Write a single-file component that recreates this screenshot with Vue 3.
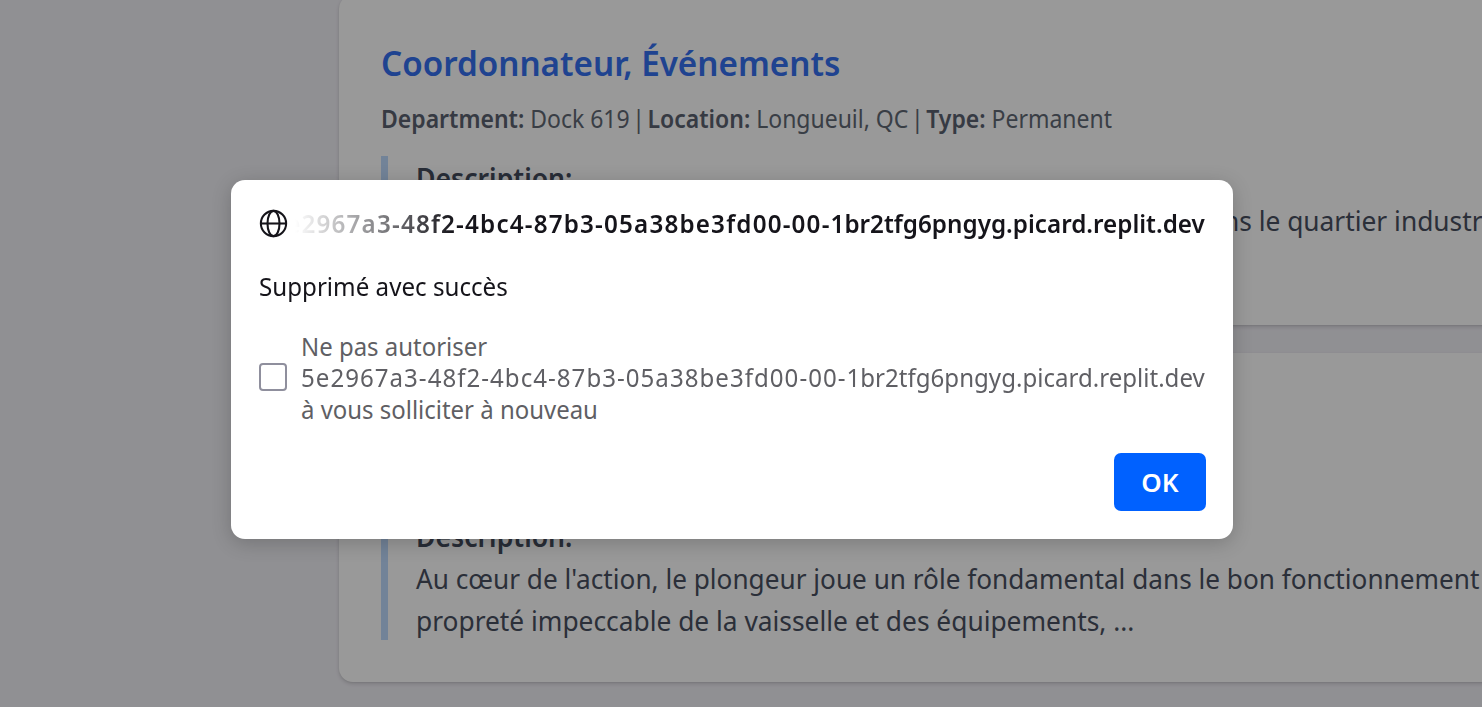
<script setup>
const hash = '5e2967a3-48f2-4bc4-87b3-05a38be3fd00-00-'
const domain = '1br2tfg6pngyg.picard.replit.dev'
</script>

<template>
  <div class="page">
    <main class="jobs">
      <article class="card">
        <h2><span class="fit title">Coordonnateur, Événements</span></h2>
        <p class="meta"><span class="fit info"><b>Department:</b> Dock 619<i> | </i><b>Location:</b> Longueuil, QC<i> | </i><b>Type:</b> Permanent</span></p>
        <div class="description">
          <strong><span class="fit label">Description:</span></strong>
          <p class="continued"><span class="fit line">dans le quartier industriel</span></p>
        </div>
      </article>
      <article class="card">
        <h2></h2>
        <p class="meta"></p>
        <div class="description">
          <strong><span class="fit label">Description:</span></strong>
          <p><span class="fit lead">Au cœur de l'action, le plongeur joue un rôle fondamental dans le bon fonctionnement</span></p>
          <p><span class="fit line">propreté impeccable de la vaisselle et des équipements, ...</span></p>
        </div>
      </article>
    </main>
    <div class="overlay">
      <section class="dialog" role="dialog">
        <header>
          <svg class="globe" viewBox="0 0 28 28" fill="none" stroke="#15141a" stroke-width="2">
            <circle cx="14" cy="14" r="12.2" />
            <ellipse cx="14" cy="14" rx="5.8" ry="12.2" />
            <path d="M1.8 14h24.4" />
          </svg>
          <div class="host"><span class="fit origin"><span class="hash">{{ hash }}</span>{{ domain }}</span></div>
        </header>
        <p class="message"><span class="fit note">Supprimé avec succès</span></p>
        <label class="block">
          <span class="box"></span>
          <span class="choice">
            <span class="row"><span class="fit words">Ne pas autoriser</span></span>
            <span class="row"><span class="fit address"><span class="hash">{{ hash }}</span>{{ domain }}</span></span>
            <span class="row"><span class="fit words">à vous solliciter à nouveau</span></span>
          </span>
        </label>
        <footer><button>OK</button></footer>
      </section>
    </div>
  </div>
</template>

<style>
body { margin: 0; overflow: hidden; }
</style>

<style scoped>
* { box-sizing: border-box; }
p, h2 { margin: 0; }
.page { position: relative; width: 1482px; height: 707px; overflow: hidden; background: #f1f0f6; font-family: "Noto Sans", sans-serif; white-space: nowrap; }
.fit { display: inline-block; transform-origin: left center; }
.title { transform: translateY(1px) scaleX(.949); }
.info { transform: translateY(1px) scaleX(.938); }
.info i { font-style: normal; word-spacing: -3.6px; }
.label { transform: translateY(1px) scaleX(.951); }
.line { transform: translateY(1px) scaleX(.94); }
.lead { transform: translateY(1px) scaleX(.935); }
.origin { transform-origin: right center; transform: scaleX(.932); }
.origin .hash { letter-spacing: 1.25px; }
.note { transform: scaleX(.929); }
.words { transform: translateY(1px) scaleX(.921); }
.address { transform: scaleX(.926); }
.address .hash { letter-spacing: 1.1px; }
.jobs { display: flex; flex-direction: column; gap: 28px; width: 1300px; margin: -5px 0 0 339px; }
.card { height: 329.5px; padding: 42px; background: #fff; border-radius: 14px; box-shadow: 0 2px 4px rgba(0, 0, 0, .14), 0 1px 2px rgba(0, 0, 0, .06); }
h2 { height: 49px; font-size: 35px; line-height: 49px; font-weight: 600; color: #3570f0; }
.meta { height: 35px; margin-top: 14px; font-size: 24.5px; line-height: 35px; color: #606874; }
.meta b { font-weight: 600; color: #5a6270; }
.description { height: 126px; margin-top: 21px; padding-left: 28px; border-left: 7px solid #bfdbfe; font-size: 28px; line-height: 42px; color: #484f60; }
.description strong { display: block; font-weight: 600; color: #434b5c; }
.continued { padding-left: 776px; }
.overlay { position: absolute; inset: 0; background: rgba(0, 0, 0, .4); }
.dialog { width: 1002px; height: 359px; margin: 180px 0 0 231px; padding: 25px 27px 28px 28px; border-radius: 14px; background: #fff; box-shadow: 0 4px 20px rgba(0, 0, 0, .2); color: #15141a; font-size: 26px; }
header { display: flex; align-items: center; height: 36px; gap: 7px; padding-right: 1px; }
.globe { width: 29px; height: 29px; flex: none; }
.host { flex: 1; min-width: 0; height: 36px; display: flex; justify-content: flex-end; overflow: hidden; line-height: 36px; font-weight: 600; mask-image: linear-gradient(to right, transparent, #000 160px); }
.message { margin-top: 27px; line-height: 36px; }
.block { display: flex; align-items: center; gap: 14px; margin-top: 26px; color: #5f5f64; }
.box { width: 28px; height: 28px; flex: none; border: 2px solid #8f8f9d; border-radius: 4px; }
.choice { display: block; width: 904px; }
.row { display: block; height: 31.5px; line-height: 31.5px; }
footer { display: flex; justify-content: flex-end; margin-top: 28px; }
button { width: 92px; height: 58px; padding: 0; border: 0; border-radius: 7px; background: #0061ff; color: #fff; font: 600 26px "Noto Sans", sans-serif; }
</style>
